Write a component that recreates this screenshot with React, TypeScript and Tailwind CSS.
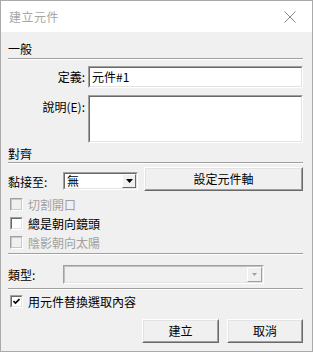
import React from "react";

const font = { fontFamily: '"Noto Sans CJK TC", "Noto Sans", sans-serif' };

// classic 3D edges
const sunkOuter = "border border-t-[#a0a0a0] border-l-[#a0a0a0] border-b-white border-r-white";
const sunkInner = "border border-t-[#696969] border-l-[#696969] border-b-[#e3e3e3] border-r-[#e3e3e3]";
const raisedOuter = "border border-t-white border-l-white border-b-[#696969] border-r-[#696969]";
const raisedInner = "border border-t-[#e3e3e3] border-l-[#e3e3e3] border-b-[#a0a0a0] border-r-[#a0a0a0]";

function Separator({ className = "" }: { className?: string }) {
  return <div className={`h-[2px] border-t border-t-[#a0a0a0] border-b border-b-white ${className}`}></div>;
}

function Button({ label, className = "" }: { label: string; className?: string }) {
  return (
    <div className={`${raisedOuter} bg-[#f0f0f0] ${className}`}>
      <div className={`${raisedInner} w-full h-full flex items-center justify-center text-[12px] text-black`}>
        {label}
      </div>
    </div>
  );
}

function Checkbox({ label, checked = false, disabled = false }: { label: string; checked?: boolean; disabled?: boolean }) {
  return (
    <div className="h-[19px] flex items-center pl-[2px]">
      <div className={`w-[13px] h-[13px] ${sunkOuter}`}>
        <div
          className={`w-full h-full ${disabled ? "border border-[#c8c8c8] bg-[#f0f0f0]" : `${sunkInner} bg-white`} flex items-center justify-center`}
        >
          {checked && (
            <svg width="7" height="7" viewBox="0 0 7 7">
              <path d="M0.5 3 L2.5 5 L6.5 1" stroke="#000" strokeWidth="1.6" fill="none" />
            </svg>
          )}
        </div>
      </div>
      <span className={`ml-[5px] text-[12px] leading-[14px] ${disabled ? "text-[#a0a0a0]" : "text-black"}`}>{label}</span>
    </div>
  );
}

export default function App() {
  return (
    <div style={font} className="w-[313px] h-[352px] border border-[#aaaaaa] bg-[#f0f0f0] flex flex-col overflow-hidden">
      {/* title bar */}
      <div className="h-[31px] bg-white flex items-center justify-between pl-[8px] pr-[16px] shrink-0">
        <span className="text-[12px] tracking-[0.5px] text-[#a6a6a6]">建立元件</span>
        <svg width="12" height="12" viewBox="0 0 12 12">
          <path d="M0.5 0.5 L11.5 11.5 M11.5 0.5 L0.5 11.5" stroke="#8a8a8a" strokeWidth="1" />
        </svg>
      </div>

      <div className="flex flex-col pl-[7px] pr-[9px]">
        {/* 一般 */}
        <div className="h-[16px] mt-[9px] flex items-center text-[12px] text-black">一般</div>
        <Separator className="mt-[1px]" />

        <div className="flex items-center mt-[6px]">
          <div className="w-[77px] text-right text-[12px] text-black">定義:</div>
          <div className={`ml-[3px] flex-1 h-[22px] ${sunkOuter}`}>
            <div className={`${sunkInner} w-full h-full bg-white flex items-center pl-[2px] text-[12px] text-black`}>
              元件#1
            </div>
          </div>
        </div>

        <div className="flex items-start mt-[7px]">
          <div className="w-[77px] text-right text-[12px] text-black mt-[3px]">說明(E):</div>
          <div className={`ml-[3px] flex-1 h-[48px] ${sunkOuter}`}>
            <div className={`${sunkInner} w-full h-full bg-white`}></div>
          </div>
        </div>

        {/* 對齊 */}
        <div className="h-[16px] mt-[3px] flex items-center text-[12px] text-black">對齊</div>
        <Separator />

        <div className="flex items-start mt-[3px] h-[24px]">
          <div className="w-[55px] text-[12px] text-black mt-[6px]">黏接至:</div>
          <div className={`w-[75px] h-[18px] mt-[5px] ${sunkOuter}`}>
            <div className={`${sunkInner} w-full h-full bg-white flex items-center`}>
              <span className="flex-1 pl-[2px] text-[12px] leading-[14px] text-black">無</span>
              <div className={`w-[14px] h-full ${raisedOuter} bg-[#f0f0f0]`}>
                <div className="w-full h-full flex items-center justify-center">
                  <svg width="7" height="4" viewBox="0 0 7 4">
                    <path d="M0 0 L7 0 L3.5 4 Z" fill="#000" />
                  </svg>
                </div>
              </div>
            </div>
          </div>
          <Button label="設定元件軸" className="ml-[6px] flex-1 h-[24px]" />
        </div>

        <div className="mt-[4px] flex flex-col">
          <Checkbox label="切割開口" disabled />
          <Checkbox label="總是朝向鏡頭" />
          <Checkbox label="陰影朝向太陽" disabled />
        </div>
        <Separator className="mt-[1px]" />

        <div className="flex items-center mt-[10px]">
          <div className="w-[55px] text-[12px] text-black">類型:</div>
          <div className="w-[201px] h-[19px] border border-t-[#a0a0a0] border-l-[#a0a0a0] border-b-white border-r-white">
            <div className="w-full h-full border border-t-[#c0c0c0] border-l-[#c0c0c0] border-b-[#e3e3e3] border-r-[#e3e3e3] bg-[#f0f0f0] flex justify-end">
              <div className="w-[15px] h-full border border-t-white border-l-white border-b-[#a0a0a0] border-r-[#a0a0a0] flex items-center justify-center">
                <svg width="5" height="3" viewBox="0 0 5 3">
                  <path d="M0 0 L5 0 L2.5 3 Z" fill="#a0a0a0" />
                </svg>
              </div>
            </div>
          </div>
        </div>
        <Separator className="mt-[4px]" />

        <div className="mt-[2px]">
          <Checkbox label="用元件替換選取內容" checked />
        </div>

        <div className="flex justify-end gap-[8px] mt-[8px]">
          <Button label="建立" className="w-[77px] h-[24px]" />
          <Button label="取消" className="w-[76px] h-[24px]" />
        </div>
      </div>
    </div>
  );
}
